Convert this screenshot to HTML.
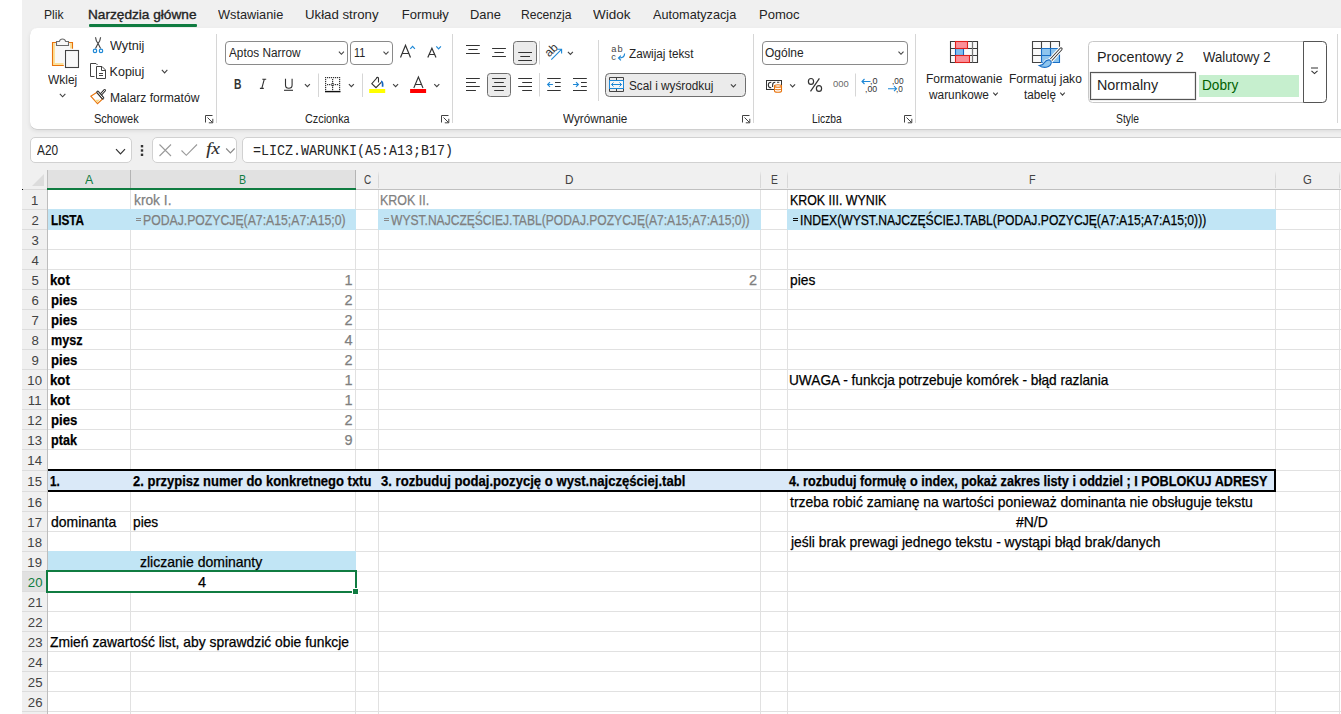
<!DOCTYPE html><html><head><meta charset="utf-8"><style>
html,body{margin:0;padding:0;}
body{width:1341px;height:714px;overflow:hidden;position:relative;background:#f0f0f0;font-family:'Liberation Sans', sans-serif;}
</style></head><body>
<div style="position:absolute;left:0;top:0;width:22px;height:714px;background:#fff"></div>
<div style="position:absolute;left:30px;top:28px;width:1340px;height:101px;background:#fff;border-radius:7px;box-shadow:0 0.5px 0.5px rgba(0,0,0,0.16),0 2px 4px rgba(0,0,0,0.09)"></div>
<div style="position:absolute;left:89px;top:24px;width:108px;height:2.5px;background:#107c41;border-radius:1px"></div>
<div style="position:absolute;left:47px;top:189px;width:1294px;height:525px;background:#fff"></div>
<div style="position:absolute;left:47px;top:209px;width:1294px;height:1px;background:#e1e1e1"></div>
<div style="position:absolute;left:47px;top:229px;width:1294px;height:1px;background:#e1e1e1"></div>
<div style="position:absolute;left:47px;top:249px;width:1294px;height:1px;background:#e1e1e1"></div>
<div style="position:absolute;left:47px;top:269px;width:1294px;height:1px;background:#e1e1e1"></div>
<div style="position:absolute;left:47px;top:289px;width:1294px;height:1px;background:#e1e1e1"></div>
<div style="position:absolute;left:47px;top:309px;width:1294px;height:1px;background:#e1e1e1"></div>
<div style="position:absolute;left:47px;top:329px;width:1294px;height:1px;background:#e1e1e1"></div>
<div style="position:absolute;left:47px;top:349px;width:1294px;height:1px;background:#e1e1e1"></div>
<div style="position:absolute;left:47px;top:369px;width:1294px;height:1px;background:#e1e1e1"></div>
<div style="position:absolute;left:47px;top:389px;width:1294px;height:1px;background:#e1e1e1"></div>
<div style="position:absolute;left:47px;top:409px;width:1294px;height:1px;background:#e1e1e1"></div>
<div style="position:absolute;left:47px;top:429px;width:1294px;height:1px;background:#e1e1e1"></div>
<div style="position:absolute;left:47px;top:449px;width:1294px;height:1px;background:#e1e1e1"></div>
<div style="position:absolute;left:47px;top:470px;width:1294px;height:1px;background:#e1e1e1"></div>
<div style="position:absolute;left:47px;top:491px;width:1294px;height:1px;background:#e1e1e1"></div>
<div style="position:absolute;left:47px;top:511px;width:1294px;height:1px;background:#e1e1e1"></div>
<div style="position:absolute;left:47px;top:531px;width:1294px;height:1px;background:#e1e1e1"></div>
<div style="position:absolute;left:47px;top:551px;width:1294px;height:1px;background:#e1e1e1"></div>
<div style="position:absolute;left:47px;top:571px;width:1294px;height:1px;background:#e1e1e1"></div>
<div style="position:absolute;left:47px;top:591px;width:1294px;height:1px;background:#e1e1e1"></div>
<div style="position:absolute;left:47px;top:611px;width:1294px;height:1px;background:#e1e1e1"></div>
<div style="position:absolute;left:47px;top:631px;width:1294px;height:1px;background:#e1e1e1"></div>
<div style="position:absolute;left:47px;top:651px;width:1294px;height:1px;background:#e1e1e1"></div>
<div style="position:absolute;left:47px;top:671px;width:1294px;height:1px;background:#e1e1e1"></div>
<div style="position:absolute;left:47px;top:691px;width:1294px;height:1px;background:#e1e1e1"></div>
<div style="position:absolute;left:47px;top:711px;width:1294px;height:1px;background:#e1e1e1"></div>
<div style="position:absolute;left:130px;top:189px;width:1px;height:525px;background:#e1e1e1"></div>
<div style="position:absolute;left:355px;top:189px;width:1px;height:525px;background:#e1e1e1"></div>
<div style="position:absolute;left:378px;top:189px;width:1px;height:525px;background:#e1e1e1"></div>
<div style="position:absolute;left:760px;top:189px;width:1px;height:525px;background:#e1e1e1"></div>
<div style="position:absolute;left:787px;top:189px;width:1px;height:525px;background:#e1e1e1"></div>
<div style="position:absolute;left:1275px;top:189px;width:1px;height:525px;background:#e1e1e1"></div>
<div style="position:absolute;left:1339px;top:189px;width:1px;height:525px;background:#e1e1e1"></div>
<div style="position:absolute;left:48px;top:209px;width:308px;height:21px;background:#c1e5f5"></div>
<div style="position:absolute;left:378px;top:209px;width:383px;height:21px;background:#c1e5f5"></div>
<div style="position:absolute;left:787px;top:209px;width:489px;height:21px;background:#c1e5f5"></div>
<div style="position:absolute;left:48px;top:551px;width:308px;height:20px;background:#c1e5f5"></div>
<div style="position:absolute;left:47px;top:469px;width:1229px;height:23px;background:#000"></div>
<div style="position:absolute;left:47px;top:471px;width:1227px;height:19px;background:#dae9f8"></div>
<div style="position:absolute;left:47px;top:170px;width:308px;height:19px;background:#e1e1e1"></div>
<div style="position:absolute;left:22px;top:571px;width:25px;height:20px;background:#e1e1e1"></div>
<div style="position:absolute;left:47px;top:170px;width:1px;height:544px;background:#bdbdbd"></div>
<div style="position:absolute;left:22px;top:189px;width:25px;height:1px;background:#d8d8d8"></div>
<div style="position:absolute;left:47px;top:189px;width:1294px;height:1px;background:#c0c0c0"></div>
<div style="position:absolute;left:47px;top:188px;width:309px;height:2px;background:#107c41"></div>
<div style="position:absolute;left:130px;top:170px;width:1px;height:18px;background:#b4b4b4"></div>
<div style="position:absolute;left:355px;top:170px;width:1px;height:18px;background:#b4b4b4"></div>
<div style="position:absolute;left:378px;top:171px;width:1px;height:17px;background:linear-gradient(#f0f0f0,#d8d8d8 30%,#d8d8d8)"></div>
<div style="position:absolute;left:760px;top:171px;width:1px;height:17px;background:linear-gradient(#f0f0f0,#d8d8d8 30%,#d8d8d8)"></div>
<div style="position:absolute;left:787px;top:171px;width:1px;height:17px;background:linear-gradient(#f0f0f0,#d8d8d8 30%,#d8d8d8)"></div>
<div style="position:absolute;left:1275px;top:171px;width:1px;height:17px;background:linear-gradient(#f0f0f0,#d8d8d8 30%,#d8d8d8)"></div>
<div style="position:absolute;left:1339px;top:171px;width:1px;height:17px;background:linear-gradient(#f0f0f0,#d8d8d8 30%,#d8d8d8)"></div>
<div style="position:absolute;left:22px;top:209px;width:25px;height:1px;background:#dcdcdc"></div>
<div style="position:absolute;left:22px;top:229px;width:25px;height:1px;background:#dcdcdc"></div>
<div style="position:absolute;left:22px;top:249px;width:25px;height:1px;background:#dcdcdc"></div>
<div style="position:absolute;left:22px;top:269px;width:25px;height:1px;background:#dcdcdc"></div>
<div style="position:absolute;left:22px;top:289px;width:25px;height:1px;background:#dcdcdc"></div>
<div style="position:absolute;left:22px;top:309px;width:25px;height:1px;background:#dcdcdc"></div>
<div style="position:absolute;left:22px;top:329px;width:25px;height:1px;background:#dcdcdc"></div>
<div style="position:absolute;left:22px;top:349px;width:25px;height:1px;background:#dcdcdc"></div>
<div style="position:absolute;left:22px;top:369px;width:25px;height:1px;background:#dcdcdc"></div>
<div style="position:absolute;left:22px;top:389px;width:25px;height:1px;background:#dcdcdc"></div>
<div style="position:absolute;left:22px;top:409px;width:25px;height:1px;background:#dcdcdc"></div>
<div style="position:absolute;left:22px;top:429px;width:25px;height:1px;background:#dcdcdc"></div>
<div style="position:absolute;left:22px;top:449px;width:25px;height:1px;background:#dcdcdc"></div>
<div style="position:absolute;left:22px;top:470px;width:25px;height:1px;background:#dcdcdc"></div>
<div style="position:absolute;left:22px;top:491px;width:25px;height:1px;background:#dcdcdc"></div>
<div style="position:absolute;left:22px;top:511px;width:25px;height:1px;background:#dcdcdc"></div>
<div style="position:absolute;left:22px;top:531px;width:25px;height:1px;background:#dcdcdc"></div>
<div style="position:absolute;left:22px;top:551px;width:25px;height:1px;background:#dcdcdc"></div>
<div style="position:absolute;left:22px;top:571px;width:25px;height:1px;background:#dcdcdc"></div>
<div style="position:absolute;left:22px;top:591px;width:25px;height:1px;background:#dcdcdc"></div>
<div style="position:absolute;left:22px;top:611px;width:25px;height:1px;background:#dcdcdc"></div>
<div style="position:absolute;left:22px;top:631px;width:25px;height:1px;background:#dcdcdc"></div>
<div style="position:absolute;left:22px;top:651px;width:25px;height:1px;background:#dcdcdc"></div>
<div style="position:absolute;left:22px;top:671px;width:25px;height:1px;background:#dcdcdc"></div>
<div style="position:absolute;left:22px;top:691px;width:25px;height:1px;background:#dcdcdc"></div>
<div style="position:absolute;left:22px;top:711px;width:25px;height:1px;background:#dcdcdc"></div>
<svg style="position:absolute;left:32px;top:174px" width="13" height="12"><path d="M12 0 L12 12 L0 12 Z" fill="#dcdcdc"/></svg>
<div style="position:absolute;left:22px;top:189px;width:1px;height:1px;background:#000"></div>
<div style="position:absolute;left:130px;top:572px;width:1px;height:19px;background:#fff"></div>
<div style="position:absolute;left:130px;top:632px;width:1px;height:19px;background:#fff"></div>
<div style="position:absolute;left:46px;top:570px;width:307px;height:19px;border:2px solid #107c41"></div>
<div style="position:absolute;left:353px;top:589px;width:5px;height:5px;background:#107c41;outline:1px solid #fff"></div>
<div style="position:absolute;left:136px;top:218px;width:5px;height:1px;background:#8a8a8a"></div>
<div style="position:absolute;left:136px;top:220px;width:5px;height:1px;background:#8a8a8a"></div>
<div style="position:absolute;left:384px;top:218px;width:5px;height:1px;background:#8a8a8a"></div>
<div style="position:absolute;left:384px;top:220px;width:5px;height:1px;background:#8a8a8a"></div>
<div style="position:absolute;left:793px;top:218px;width:5px;height:1px;background:#111"></div>
<div style="position:absolute;left:793px;top:220px;width:5px;height:1px;background:#111"></div>
<div style="position:absolute;left:30px;top:137px;width:102px;height:26px;box-sizing:border-box;border:1px solid #d1d1d1;border-radius:5px;background:#fff;"></div>
<div style="position:absolute;left:152px;top:137px;width:85px;height:26px;box-sizing:border-box;border:1px solid #d1d1d1;border-radius:5px;background:#fff;"></div>
<div style="position:absolute;left:242px;top:137px;width:1158px;height:26px;box-sizing:border-box;border:1px solid #d1d1d1;border-radius:5px;background:#fff;"></div>
<div style="position:absolute;left:225px;top:41px;width:123px;height:24px;box-sizing:border-box;border:1px solid #8a8a8a;border-radius:4px;background:#fff;"></div>
<div style="position:absolute;left:350px;top:41px;width:43px;height:24px;box-sizing:border-box;border:1px solid #8a8a8a;border-radius:4px;background:#fff;"></div>
<div style="position:absolute;left:762px;top:41px;width:146px;height:24px;box-sizing:border-box;border:1px solid #8a8a8a;border-radius:4px;background:#fff;"></div>
<svg style="position:absolute;left:0;top:0" width="1341" height="714"><rect x="53" y="43" width="19" height="22" fill="#f8f8f8"/><path d="M54 43 V64 H63.5 M71 43 V48.5" fill="none" stroke="#fbe09a" stroke-width="2"/><path d="M56.5 42.5 H52.5 V65.5 H63.8 M68.5 42.5 H72.5 V48.8" fill="none" stroke="#e8730c" stroke-width="1.1"/><path d="M56.5 45.5 V41.5 H59.3 A3.3 3.3 0 0 1 65.7 41.5 H68.5 V45.5 Z" fill="#f8f8f8" stroke="#6b6b6b" stroke-width="1.1"/><rect x="65.5" y="50.5" width="13" height="17" fill="#f8f8f8" stroke="#fff" stroke-width="3"/><rect x="65.5" y="50.5" width="13" height="17" fill="#f8f8f8" stroke="#424242" stroke-width="1.1"/><path d="M95.5 37.3 Q95.9 41.3 98.1 43.5 L100.6 48.4 M100.6 37.3 Q100.2 41.3 98 43.5 L95.5 48.4" stroke="#444" stroke-width="1.15" fill="none"/><circle cx="95" cy="50.9" r="1.7" fill="none" stroke="#1e88d6" stroke-width="1.2"/><circle cx="101" cy="50.9" r="1.7" fill="none" stroke="#1e88d6" stroke-width="1.2"/><path d="M94.5 76.5 H90.5 V63.5 H96 L97.5 65" fill="none" stroke="#424242"/><path d="M96.5 66.5 H102 L105.5 70 V78.5 H96.5 Z M101.5 66.5 V70.5 H105.5" fill="#fff" stroke="#424242"/><path d="M99 73.5 H103 M99 75.5 H103" stroke="#424242"/><path d="M90.8 96.2 L97 92.3 L102.6 99 L97.5 103.7 Z" fill="#fff" stroke="#e8730c" stroke-width="1.1"/><path d="M94.5 100 L100 99.5 L97.3 102.8 Z" fill="#fbd88a"/><path d="M100.8 94.6 L104.6 90.4" stroke="#333" stroke-width="2.8" stroke-linecap="round"/><path d="M100.8 94.6 L104.6 90.4" stroke="#fff" stroke-width="0.9" stroke-linecap="round"/><path d="M97.8 92.2 L102.8 98" stroke="#333" stroke-width="3" stroke-linecap="round"/><path d="M97.8 92.2 L102.8 98" stroke="#fff" stroke-width="1" stroke-linecap="round"/><path d="M59.85 93.8 L62.6 96.8 L65.35 93.8" fill="none" stroke="#424242" stroke-width="1.1"/><path d="M161.85 69.9 L164.6 72.9 L167.35 69.9" fill="none" stroke="#424242" stroke-width="1.1"/><path d="M205.5 122.5 V115.5 H212.5" fill="none" stroke="#424242"/><path d="M207.5 117.5 L212.5 122.5 M212.8 118.8 V122.8 H208.8" fill="none" stroke="#424242"/><path d="M441.5 122.5 V115.5 H448.5" fill="none" stroke="#424242"/><path d="M443.5 117.5 L448.5 122.5 M448.8 118.8 V122.8 H444.8" fill="none" stroke="#424242"/><path d="M742.5 122.5 V115.5 H749.5" fill="none" stroke="#424242"/><path d="M744.5 117.5 L749.5 122.5 M749.8 118.8 V122.8 H745.8" fill="none" stroke="#424242"/><path d="M904.5 122.5 V115.5 H911.5" fill="none" stroke="#424242"/><path d="M906.5 117.5 L911.5 122.5 M911.8 118.8 V122.8 H907.8" fill="none" stroke="#424242"/><path d="M216.5 34 V123" stroke="#d6d6d6"/><path d="M452.5 34 V123" stroke="#d6d6d6"/><path d="M753.5 34 V123" stroke="#d6d6d6"/><path d="M915.5 34 V123" stroke="#d6d6d6"/><path d="M1337.5 34 V123" stroke="#d6d6d6"/><path d="M318.5 73.5 V97" stroke="#d6d6d6"/><path d="M362.5 73.5 V97" stroke="#d6d6d6"/><path d="M539.5 41 V64.5" stroke="#d6d6d6"/><path d="M539.5 73 V96.5" stroke="#d6d6d6"/><path d="M598.5 40 V101" stroke="#d6d6d6"/><path d="M855.5 73.5 V96.5" stroke="#d6d6d6"/><path d="M338.9 51.7 L341.4 54.3 L343.9 51.7" fill="none" stroke="#424242" stroke-width="1.1"/><path d="M383.5 51.7 L386 54.3 L388.5 51.7" fill="none" stroke="#424242" stroke-width="1.1"/><path d="M400.5 57.5 L405.5 45.3 L410.5 57.5 M402.2 53.5 H408.8" fill="none" stroke="#333" stroke-width="1.2"/><path d="M410.3 48.8 L412.6 46.4 L414.9 48.8" fill="none" stroke="#1e88d6" stroke-width="1.2"/><path d="M427.8 57.5 L431.9 48.3 L436 57.5 M429.2 54.5 H434.6" fill="none" stroke="#333" stroke-width="1.2"/><path d="M436.3 46.4 L438.6 48.8 L440.9 46.4" fill="none" stroke="#1e88d6" stroke-width="1.2"/><path d="M262.3 79.2 H266.2 M259.9 88.4 H263.8 M264.3 79.2 L261.8 88.4" stroke="#333" stroke-width="1.1" fill="none"/><path d="M285.5 78.7 V85 A3.3 3.3 0 0 0 292.1 85 V78.7" fill="none" stroke="#333" stroke-width="1.1"/><path d="M284 90.3 H293" stroke="#333" stroke-width="1.1"/><path d="M304.9 84.10000000000001 L307.4 86.7 L309.9 84.10000000000001" fill="none" stroke="#424242" stroke-width="1.1"/><rect x="325" y="77" width="1.2" height="1.2" fill="#333"/><rect x="327" y="77" width="1.2" height="1.2" fill="#333"/><rect x="329" y="77" width="1.2" height="1.2" fill="#333"/><rect x="331" y="77" width="1.2" height="1.2" fill="#333"/><rect x="333" y="77" width="1.2" height="1.2" fill="#333"/><rect x="335" y="77" width="1.2" height="1.2" fill="#333"/><rect x="337" y="77" width="1.2" height="1.2" fill="#333"/><rect x="339" y="77" width="1.2" height="1.2" fill="#333"/><rect x="325" y="79" width="1.2" height="1.2" fill="#333"/><rect x="339" y="79" width="1.2" height="1.2" fill="#333"/><rect x="332" y="79" width="1.2" height="1.2" fill="#333"/><rect x="325" y="81" width="1.2" height="1.2" fill="#333"/><rect x="339" y="81" width="1.2" height="1.2" fill="#333"/><rect x="332" y="81" width="1.2" height="1.2" fill="#333"/><rect x="325" y="83" width="1.2" height="1.2" fill="#333"/><rect x="339" y="83" width="1.2" height="1.2" fill="#333"/><rect x="332" y="83" width="1.2" height="1.2" fill="#333"/><rect x="325" y="85" width="1.2" height="1.2" fill="#333"/><rect x="339" y="85" width="1.2" height="1.2" fill="#333"/><rect x="332" y="85" width="1.2" height="1.2" fill="#333"/><rect x="325" y="87" width="1.2" height="1.2" fill="#333"/><rect x="339" y="87" width="1.2" height="1.2" fill="#333"/><rect x="332" y="87" width="1.2" height="1.2" fill="#333"/><rect x="325" y="89" width="1.2" height="1.2" fill="#333"/><rect x="339" y="89" width="1.2" height="1.2" fill="#333"/><rect x="332" y="89" width="1.2" height="1.2" fill="#333"/><rect x="327" y="84" width="1.2" height="1.2" fill="#333"/><rect x="329" y="84" width="1.2" height="1.2" fill="#333"/><rect x="335" y="84" width="1.2" height="1.2" fill="#333"/><rect x="337" y="84" width="1.2" height="1.2" fill="#333"/><circle cx="332.6" cy="84.6" r="1.3" fill="none" stroke="#333" stroke-width="0.9"/><path d="M325 91.6 H340.5" stroke="#111" stroke-width="1.4"/><path d="M348.9 84.10000000000001 L351.4 86.7 L353.9 84.10000000000001" fill="none" stroke="#424242" stroke-width="1.1"/><path d="M378.5 82.5 V78.5 A1 1 0 0 0 376.5 78.3 L371.8 83.7 L376 87.7 L381.2 82.3" fill="none" stroke="#333" stroke-width="1.1"/><path d="M381 81.3 Q383 81.3 382.6 86.8" fill="none" stroke="#1565c0" stroke-width="1.7"/><rect x="369.2" y="89" width="16" height="4" fill="#ffff00"/><path d="M393.1 84.10000000000001 L395.6 86.7 L398.1 84.10000000000001" fill="none" stroke="#424242" stroke-width="1.1"/><path d="M413.8 88 L418.4 77 L423 88 M415.5 84.5 H421.3" fill="none" stroke="#333" stroke-width="1.1"/><rect x="410.1" y="89" width="16" height="4" fill="#ff0000"/><path d="M434.3 84.10000000000001 L436.8 86.7 L439.3 84.10000000000001" fill="none" stroke="#424242" stroke-width="1.1"/><path d="M466 45.5 H479.8 M468.4 49.5 H477.7 M466 53.5 H479.8" stroke="#333" stroke-width="1.15" fill="none"/><path d="M492.1 48.5 H505.9 M494.4 52.5 H503.8 M492.1 56.5 H505.9" stroke="#333" stroke-width="1.15" fill="none"/><rect x="513.5" y="41.5" width="23" height="23" rx="3" fill="#ebebeb" stroke="#6e6e6e"/><path d="M518.2 52.5 H532 M520.3 56.5 H530 M518.2 60.5 H532" stroke="#333" stroke-width="1.15" fill="none"/><text x="0" y="0" transform="translate(549.2 57.6) rotate(-45)" font-family="Liberation Sans" font-size="12" fill="#333">ab</text><path d="M551.3 59.7 L561.5 49.3 M557.3 49.2 H561.6 V53.5" fill="none" stroke="#1e88d6" stroke-width="1.1"/><path d="M567.9 51.900000000000006 L570.4 54.5 L572.9 51.900000000000006" fill="none" stroke="#424242" stroke-width="1.1"/><path d="M466 78.5 H479.8 M466 82.5 H475.9 M466 86.5 H479.8 M466 90.5 H475.9" stroke="#333" stroke-width="1.15" fill="none"/><rect x="487.5" y="73.5" width="23" height="23" rx="3" fill="#ebebeb" stroke="#6e6e6e"/><path d="M492.1 78.5 H505.9 M494.2 82.5 H503.8 M492.1 86.5 H505.9 M494.2 90.5 H503.8" stroke="#333" stroke-width="1.15" fill="none"/><path d="M518.2 78.5 H532 M522.2 82.5 H532 M518.2 86.5 H532 M522.2 90.5 H532" stroke="#333" stroke-width="1.15" fill="none"/><path d="M547.2 78.5 H560.7 M555 82.5 H560.7 M555 86.5 H560.7 M547.2 90.5 H560.7" stroke="#333" stroke-width="1.15" fill="none"/><path d="M547.6 84.5 H552.9 M550 82.2 L547.6 84.5 L550 86.8" fill="none" stroke="#1e88d6" stroke-width="1.1"/><path d="M573 78.5 H586.8 M581 82.5 H586.8 M581 86.5 H586.8 M573 90.5 H586.8" stroke="#333" stroke-width="1.15" fill="none"/><path d="M573 84.5 H578.4 M576 82.2 L578.4 84.5 L576 86.8" fill="none" stroke="#1e88d6" stroke-width="1.1"/><text x="611.2" y="52.3" font-family="Liberation Sans" font-size="9.3" fill="#444">a</text><text x="617.4" y="52.3" font-family="Liberation Sans" font-size="9.3" fill="#444">b</text><text x="611.2" y="59.8" font-family="Liberation Sans" font-size="9.3" fill="#444">c</text><path d="M624.6 53.4 Q624.6 58 618.6 58 M620.9 55.7 L618.5 58 L620.9 60.3" fill="none" stroke="#1e88d6" stroke-width="1.15"/><rect x="605.5" y="73.5" width="140" height="23" rx="4" fill="#ebebeb" stroke="#6e6e6e"/><path d="M609.5 77.5 H623.5 M609.5 91.5 H623.5 M616.5 77.5 V80.5 M616.5 88.5 V91.5 M609.5 77.5 V91.5 M623.5 77.5 V91.5" fill="none" stroke="#444"/><rect x="609.5" y="80.5" width="14" height="8" fill="#f7f7f7" stroke="#1e88d6"/><path d="M611.5 84.5 H621.5 M613.5 82.5 L611.5 84.5 L613.5 86.5 M619.5 82.5 L621.5 84.5 L619.5 86.5" fill="none" stroke="#1e88d6"/><path d="M730.9 84.3 L733.4 86.89999999999999 L735.9 84.3" fill="none" stroke="#424242" stroke-width="1.1"/><path d="M898.5 51.7 L901 54.3 L903.5 51.7" fill="none" stroke="#424242" stroke-width="1.1"/><rect x="766.5" y="80.5" width="15" height="9" fill="#fff" stroke="#333"/><path d="M771.3 82.3 Q768.3 82.3 768.3 85 Q768.3 87.8 771.3 87.8 M775.3 82.3 Q772.6 82.3 772.6 85 V87 M777 82.3 H779.3" fill="none" stroke="#333" stroke-width="1.1"/><path d="M774.5 86 V91 A3.5 1.3 0 0 0 781.5 91 V86 Z" fill="#fff" stroke="#e8730c" stroke-width="1.1"/><ellipse cx="778" cy="86" rx="3.5" ry="1.3" fill="#fff" stroke="#e8730c" stroke-width="1.1"/><path d="M774.5 88.5 A3.5 1.3 0 0 0 781.5 88.5" fill="none" stroke="#e8730c"/><path d="M790.1 84.3 L792.6 86.89999999999999 L795.1 84.3" fill="none" stroke="#424242" stroke-width="1.1"/><ellipse cx="811" cy="81.4" rx="2.6" ry="2.9" fill="none" stroke="#333" stroke-width="1.2"/><ellipse cx="819" cy="88.5" rx="2.6" ry="2.9" fill="none" stroke="#333" stroke-width="1.2"/><path d="M819.4 78.3 L810.5 91.3" stroke="#333" stroke-width="1.2"/><path d="M862 81.5 H870.5 M864.5 79 L862 81.5 L864.5 84" fill="none" stroke="#1e88d6" stroke-width="1.1"/><path d="M888 88.7 H896.5 M894 86.2 L896.5 88.7 L894 91.2" fill="none" stroke="#1e88d6" stroke-width="1.1"/><rect x="950.5" y="41.5" width="27" height="21" fill="#fafafa"/><path d="M950.5 41.5 H977.5 V62.5 H950.5 Z M950.5 48.5 H977.5 M950.5 55.5 H977.5 M972.5 41.5 V62.5" fill="none" stroke="#3a3a3a" stroke-width="1.1"/><path d="M972.5 41.5 V62.5" stroke="#777" stroke-width="1.1"/><rect x="955.5" y="48.5" width="8" height="7" fill="#7dbdf0" stroke="#1565c0" stroke-width="1.1"/><rect x="955.5" y="41.5" width="12" height="7" fill="#fb8f98" stroke="#e0201c" stroke-width="1.1"/><rect x="955.5" y="55.5" width="14" height="7" fill="#fb8f98" stroke="#e0201c" stroke-width="1.1"/><path d="M993.25 92.7 L995.5 95.10000000000001 L997.75 92.7" fill="none" stroke="#424242" stroke-width="1.1"/><rect x="1032.5" y="41.5" width="27" height="21" fill="#fafafa"/><rect x="1041.5" y="48.5" width="18" height="14" fill="#8ec5ee"/><path d="M1041.5 62.5 H1032.5 V41.5 H1059.5 V48.5 M1032.5 48.5 H1041.5 M1032.5 55.5 H1041.5 M1041.5 41.5 V48.5 M1050.5 41.5 V48.5" fill="none" stroke="#444" stroke-width="1.1"/><path d="M1041.5 62.5 V48.5 H1059.5 V62.5 H1041.5 M1041.5 55.5 H1059.5 M1050.5 48.5 V62.5" fill="none" stroke="#1a6fc6" stroke-width="1.1"/><path d="M1049.5 61.5 L1061 49" stroke="#fff" stroke-width="5.5" stroke-linecap="round"/><path d="M1049.5 61.5 L1061 49" stroke="#333" stroke-width="3.2" stroke-linecap="round"/><path d="M1049.5 61.5 L1061 49" stroke="#fff" stroke-width="1.3" stroke-linecap="round"/><path d="M1039.3 65.6 Q1042.8 65.6 1044.3 62.6 Q1046.3 59.4 1049.6 59.9 L1051.3 61.9 Q1051.3 66.2 1046.3 67.2 Q1042.3 67.8 1039.3 65.6 Z" fill="#fff" stroke="#fff" stroke-width="2.2"/><path d="M1039.3 65.6 Q1042.8 65.6 1044.3 62.6 Q1046.3 59.4 1049.6 59.9 L1051.3 61.9 Q1051.3 66.2 1046.3 67.2 Q1042.3 67.8 1039.3 65.6 Z" fill="#8ec5ee" stroke="#1a6fc6" stroke-width="1.1"/><path d="M1060.25 92.7 L1062.5 95.10000000000001 L1064.75 92.7" fill="none" stroke="#424242" stroke-width="1.1"/><rect x="1088.5" y="41.5" width="238" height="61" rx="4" fill="#fff" stroke="#c8c8c8"/><path d="M1303.5 41.5 H1322.5 A4 4 0 0 1 1326.5 45.5 V98.5 A4 4 0 0 1 1322.5 102.5 H1303.5 Z" fill="#fff" stroke="#555"/><rect x="1090.5" y="72.5" width="105" height="27" fill="#fff" stroke="#555" stroke-width="1.2"/><rect x="1091.5" y="73.5" width="103" height="25" fill="none" stroke="#e6e6e6"/><rect x="1199" y="75" width="100" height="22" fill="#c6efce"/><path d="M1311 68 H1318 M1311.5 70.8 L1314.5 73.6 L1317.5 70.8" fill="none" stroke="#333" stroke-width="1.1"/><path d="M116.0 149.2 L120.5 153.8 L125.0 149.2" fill="none" stroke="#333" stroke-width="1.2"/><rect x="140.8" y="145" width="2.4" height="2.4" fill="#333"/><rect x="140.8" y="149.3" width="2.4" height="2.4" fill="#333"/><rect x="140.8" y="153.6" width="2.4" height="2.4" fill="#333"/><path d="M159.5 144.5 L171 156 M171 144.5 L159.5 156" stroke="#9a9a9a" stroke-width="1.1"/><path d="M181.5 150.5 L186.3 155.3 L197 144.5" fill="none" stroke="#9a9a9a" stroke-width="1.1"/><text x="206.3" y="154.2" font-family="Liberation Serif" font-style="italic" font-size="17.5" fill="#2a2a2a" stroke="#2a2a2a" stroke-width="0.15" transform="translate(206.3 0) scale(1.08 1) translate(-206.3 0)">fx</text><path d="M226.15 148.5 L230.4 152.89999999999998 L234.65 148.5" fill="none" stroke="#888" stroke-width="1.1"/></svg>
<div style="position:absolute;left:43.57px;top:8.00px;white-space:pre;font:normal normal 13px/1 'Liberation Sans',sans-serif;color:#242424;transform:scaleX(0.9341);transform-origin:0 0;">Plik</div>
<div style="position:absolute;left:88.25px;top:8.00px;white-space:pre;font:normal normal 13px/1 'Liberation Sans',sans-serif;color:#242424;transform:scaleX(1.0499);transform-origin:0 0;-webkit-text-stroke:0.35px #242424;">Narzędzia główne</div>
<div style="position:absolute;left:218.00px;top:8.00px;white-space:pre;font:normal normal 13px/1 'Liberation Sans',sans-serif;color:#242424;transform:scaleX(0.9813);transform-origin:0 0;">Wstawianie</div>
<div style="position:absolute;left:304.98px;top:8.00px;white-space:pre;font:normal normal 13px/1 'Liberation Sans',sans-serif;color:#242424;transform:scaleX(1.0174);transform-origin:0 0;">Układ strony</div>
<div style="position:absolute;left:401.80px;top:8.00px;white-space:pre;font:normal normal 13px/1 'Liberation Sans',sans-serif;color:#242424;">Formuły</div>
<div style="position:absolute;left:470.01px;top:8.00px;white-space:pre;font:normal normal 13px/1 'Liberation Sans',sans-serif;color:#242424;transform:scaleX(0.9917);transform-origin:0 0;">Dane</div>
<div style="position:absolute;left:520.57px;top:8.00px;white-space:pre;font:normal normal 13px/1 'Liberation Sans',sans-serif;color:#242424;transform:scaleX(0.9321);transform-origin:0 0;">Recenzja</div>
<div style="position:absolute;left:592.60px;top:8.00px;white-space:pre;font:normal normal 13px/1 'Liberation Sans',sans-serif;color:#242424;transform:scaleX(1.0350);transform-origin:0 0;">Widok</div>
<div style="position:absolute;left:652.90px;top:8.00px;white-space:pre;font:normal normal 13px/1 'Liberation Sans',sans-serif;color:#242424;transform:scaleX(0.9764);transform-origin:0 0;">Automatyzacja</div>
<div style="position:absolute;left:759.30px;top:8.00px;white-space:pre;font:normal normal 13px/1 'Liberation Sans',sans-serif;color:#242424;transform:scaleX(1.0035);transform-origin:0 0;">Pomoc</div>
<div style="position:absolute;left:84.90px;top:172.77px;white-space:pre;font:normal normal 13.5px/1 'Liberation Sans',sans-serif;color:#107c41;transform:scaleX(0.9111);transform-origin:0 0;">A</div>
<div style="position:absolute;left:239.41px;top:172.77px;white-space:pre;font:normal normal 13.5px/1 'Liberation Sans',sans-serif;color:#107c41;transform:scaleX(0.7875);transform-origin:0 0;">B</div>
<div style="position:absolute;left:363.60px;top:172.77px;white-space:pre;font:normal normal 13.5px/1 'Liberation Sans',sans-serif;color:#424242;transform:scaleX(0.7400);transform-origin:0 0;">C</div>
<div style="position:absolute;left:564.83px;top:172.77px;white-space:pre;font:normal normal 13.5px/1 'Liberation Sans',sans-serif;color:#424242;transform:scaleX(0.8667);transform-origin:0 0;">D</div>
<div style="position:absolute;left:771.04px;top:172.77px;white-space:pre;font:normal normal 13.5px/1 'Liberation Sans',sans-serif;color:#424242;transform:scaleX(0.7625);transform-origin:0 0;">E</div>
<div style="position:absolute;left:1028.70px;top:172.77px;white-space:pre;font:normal normal 13.5px/1 'Liberation Sans',sans-serif;color:#424242;transform:scaleX(0.8000);transform-origin:0 0;">F</div>
<div style="position:absolute;left:1303.40px;top:172.77px;white-space:pre;font:normal normal 13.5px/1 'Liberation Sans',sans-serif;color:#424242;transform:scaleX(0.8400);transform-origin:0 0;">G</div>
<div style="position:absolute;left:31.00px;top:194.23px;white-space:pre;font:normal normal 13.2px/1 'Liberation Sans',sans-serif;color:#424242;">1</div>
<div style="position:absolute;left:31.50px;top:214.23px;white-space:pre;font:normal normal 13.2px/1 'Liberation Sans',sans-serif;color:#424242;">2</div>
<div style="position:absolute;left:31.50px;top:234.23px;white-space:pre;font:normal normal 13.2px/1 'Liberation Sans',sans-serif;color:#424242;">3</div>
<div style="position:absolute;left:31.50px;top:254.23px;white-space:pre;font:normal normal 13.2px/1 'Liberation Sans',sans-serif;color:#424242;">4</div>
<div style="position:absolute;left:31.50px;top:274.23px;white-space:pre;font:normal normal 13.2px/1 'Liberation Sans',sans-serif;color:#424242;">5</div>
<div style="position:absolute;left:31.50px;top:294.23px;white-space:pre;font:normal normal 13.2px/1 'Liberation Sans',sans-serif;color:#424242;">6</div>
<div style="position:absolute;left:31.50px;top:314.23px;white-space:pre;font:normal normal 13.2px/1 'Liberation Sans',sans-serif;color:#424242;">7</div>
<div style="position:absolute;left:31.50px;top:334.23px;white-space:pre;font:normal normal 13.2px/1 'Liberation Sans',sans-serif;color:#424242;">8</div>
<div style="position:absolute;left:31.50px;top:354.23px;white-space:pre;font:normal normal 13.2px/1 'Liberation Sans',sans-serif;color:#424242;">9</div>
<div style="position:absolute;left:27.33px;top:374.23px;white-space:pre;font:normal normal 13.2px/1 'Liberation Sans',sans-serif;color:#424242;">10</div>
<div style="position:absolute;left:27.82px;top:394.23px;white-space:pre;font:normal normal 13.2px/1 'Liberation Sans',sans-serif;color:#424242;">11</div>
<div style="position:absolute;left:27.33px;top:414.23px;white-space:pre;font:normal normal 13.2px/1 'Liberation Sans',sans-serif;color:#424242;">12</div>
<div style="position:absolute;left:27.33px;top:434.23px;white-space:pre;font:normal normal 13.2px/1 'Liberation Sans',sans-serif;color:#424242;">13</div>
<div style="position:absolute;left:27.33px;top:454.23px;white-space:pre;font:normal normal 13.2px/1 'Liberation Sans',sans-serif;color:#424242;">14</div>
<div style="position:absolute;left:27.33px;top:475.23px;white-space:pre;font:normal normal 13.2px/1 'Liberation Sans',sans-serif;color:#424242;">15</div>
<div style="position:absolute;left:27.33px;top:496.23px;white-space:pre;font:normal normal 13.2px/1 'Liberation Sans',sans-serif;color:#424242;">16</div>
<div style="position:absolute;left:27.33px;top:516.23px;white-space:pre;font:normal normal 13.2px/1 'Liberation Sans',sans-serif;color:#424242;">17</div>
<div style="position:absolute;left:27.33px;top:536.23px;white-space:pre;font:normal normal 13.2px/1 'Liberation Sans',sans-serif;color:#424242;">18</div>
<div style="position:absolute;left:27.33px;top:556.23px;white-space:pre;font:normal normal 13.2px/1 'Liberation Sans',sans-serif;color:#424242;">19</div>
<div style="position:absolute;left:27.83px;top:576.23px;white-space:pre;font:normal normal 13.2px/1 'Liberation Sans',sans-serif;color:#107c41;">20</div>
<div style="position:absolute;left:27.83px;top:596.23px;white-space:pre;font:normal normal 13.2px/1 'Liberation Sans',sans-serif;color:#424242;">21</div>
<div style="position:absolute;left:27.83px;top:616.23px;white-space:pre;font:normal normal 13.2px/1 'Liberation Sans',sans-serif;color:#424242;">22</div>
<div style="position:absolute;left:27.83px;top:636.23px;white-space:pre;font:normal normal 13.2px/1 'Liberation Sans',sans-serif;color:#424242;">23</div>
<div style="position:absolute;left:27.83px;top:656.23px;white-space:pre;font:normal normal 13.2px/1 'Liberation Sans',sans-serif;color:#424242;">24</div>
<div style="position:absolute;left:27.83px;top:676.23px;white-space:pre;font:normal normal 13.2px/1 'Liberation Sans',sans-serif;color:#424242;">25</div>
<div style="position:absolute;left:27.83px;top:696.23px;white-space:pre;font:normal normal 13.2px/1 'Liberation Sans',sans-serif;color:#424242;">26</div>
<div style="position:absolute;left:133.50px;top:192.73px;white-space:pre;font:normal normal 14.5px/1 'Liberation Sans',sans-serif;color:#7f7f7f;transform:scaleX(0.9493);transform-origin:0 0;-webkit-text-stroke:0.25px #7f7f7f;">krok I.</div>
<div style="position:absolute;left:380.44px;top:192.73px;white-space:pre;font:normal normal 14.5px/1 'Liberation Sans',sans-serif;color:#7f7f7f;transform:scaleX(0.8608);transform-origin:0 0;-webkit-text-stroke:0.25px #7f7f7f;">KROK II.</div>
<div style="position:absolute;left:789.95px;top:192.73px;white-space:pre;font:normal normal 14.5px/1 'Liberation Sans',sans-serif;color:#000;transform:scaleX(0.8544);transform-origin:0 0;-webkit-text-stroke:0.25px #000;">KROK III. WYNIK</div>
<div style="position:absolute;left:50.70px;top:212.73px;white-space:pre;font:normal bold 14.5px/1 'Liberation Sans',sans-serif;color:#000;transform:scaleX(0.8104);transform-origin:0 0;-webkit-text-stroke:0.25px #000;">LISTA</div>
<div style="position:absolute;left:143.06px;top:212.73px;white-space:pre;font:normal normal 14.5px/1 'Liberation Sans',sans-serif;color:#7f7f7f;transform:scaleX(0.8438);transform-origin:0 0;-webkit-text-stroke:0.25px #7f7f7f;">PODAJ.POZYCJĘ(A7:A15;A7:A15;0)</div>
<div style="position:absolute;left:390.90px;top:212.73px;white-space:pre;font:normal normal 14.5px/1 'Liberation Sans',sans-serif;color:#7f7f7f;transform:scaleX(0.8324);transform-origin:0 0;-webkit-text-stroke:0.25px #7f7f7f;">WYST.NAJCZĘŚCIEJ.TABL(PODAJ.POZYCJĘ(A7:A15;A7:A15;0))</div>
<div style="position:absolute;left:800.36px;top:212.73px;white-space:pre;font:normal normal 14.5px/1 'Liberation Sans',sans-serif;color:#000;transform:scaleX(0.8380);transform-origin:0 0;-webkit-text-stroke:0.25px #000;">INDEX(WYST.NAJCZĘŚCIEJ.TABL(PODAJ.POZYCJĘ(A7:A15;A7:A15;0)))</div>
<div style="position:absolute;left:49.79px;top:272.73px;white-space:pre;font:normal bold 14.5px/1 'Liberation Sans',sans-serif;color:#000;transform:scaleX(0.9129);transform-origin:0 0;-webkit-text-stroke:0.25px #000;">kot</div>
<div style="position:absolute;left:344.50px;top:272.73px;white-space:pre;font:normal normal 14.5px/1 'Liberation Sans',sans-serif;color:#7f7f7f;-webkit-text-stroke:0.25px #7f7f7f;">1</div>
<div style="position:absolute;left:50.70px;top:292.73px;white-space:pre;font:normal bold 14.5px/1 'Liberation Sans',sans-serif;color:#000;transform:scaleX(0.9085);transform-origin:0 0;-webkit-text-stroke:0.25px #000;">pies</div>
<div style="position:absolute;left:344.50px;top:292.73px;white-space:pre;font:normal normal 14.5px/1 'Liberation Sans',sans-serif;color:#7f7f7f;-webkit-text-stroke:0.25px #7f7f7f;">2</div>
<div style="position:absolute;left:50.70px;top:312.73px;white-space:pre;font:normal bold 14.5px/1 'Liberation Sans',sans-serif;color:#000;transform:scaleX(0.9085);transform-origin:0 0;-webkit-text-stroke:0.25px #000;">pies</div>
<div style="position:absolute;left:344.50px;top:312.73px;white-space:pre;font:normal normal 14.5px/1 'Liberation Sans',sans-serif;color:#7f7f7f;-webkit-text-stroke:0.25px #7f7f7f;">2</div>
<div style="position:absolute;left:50.70px;top:332.73px;white-space:pre;font:normal bold 14.5px/1 'Liberation Sans',sans-serif;color:#000;transform:scaleX(0.8689);transform-origin:0 0;-webkit-text-stroke:0.25px #000;">mysz</div>
<div style="position:absolute;left:344.50px;top:332.73px;white-space:pre;font:normal normal 14.5px/1 'Liberation Sans',sans-serif;color:#7f7f7f;-webkit-text-stroke:0.25px #7f7f7f;">4</div>
<div style="position:absolute;left:50.70px;top:352.73px;white-space:pre;font:normal bold 14.5px/1 'Liberation Sans',sans-serif;color:#000;transform:scaleX(0.9085);transform-origin:0 0;-webkit-text-stroke:0.25px #000;">pies</div>
<div style="position:absolute;left:344.50px;top:352.73px;white-space:pre;font:normal normal 14.5px/1 'Liberation Sans',sans-serif;color:#7f7f7f;-webkit-text-stroke:0.25px #7f7f7f;">2</div>
<div style="position:absolute;left:49.79px;top:372.73px;white-space:pre;font:normal bold 14.5px/1 'Liberation Sans',sans-serif;color:#000;transform:scaleX(0.9129);transform-origin:0 0;-webkit-text-stroke:0.25px #000;">kot</div>
<div style="position:absolute;left:344.50px;top:372.73px;white-space:pre;font:normal normal 14.5px/1 'Liberation Sans',sans-serif;color:#7f7f7f;-webkit-text-stroke:0.25px #7f7f7f;">1</div>
<div style="position:absolute;left:49.79px;top:392.73px;white-space:pre;font:normal bold 14.5px/1 'Liberation Sans',sans-serif;color:#000;transform:scaleX(0.9129);transform-origin:0 0;-webkit-text-stroke:0.25px #000;">kot</div>
<div style="position:absolute;left:344.50px;top:392.73px;white-space:pre;font:normal normal 14.5px/1 'Liberation Sans',sans-serif;color:#7f7f7f;-webkit-text-stroke:0.25px #7f7f7f;">1</div>
<div style="position:absolute;left:50.70px;top:412.73px;white-space:pre;font:normal bold 14.5px/1 'Liberation Sans',sans-serif;color:#000;transform:scaleX(0.9085);transform-origin:0 0;-webkit-text-stroke:0.25px #000;">pies</div>
<div style="position:absolute;left:344.50px;top:412.73px;white-space:pre;font:normal normal 14.5px/1 'Liberation Sans',sans-serif;color:#7f7f7f;-webkit-text-stroke:0.25px #7f7f7f;">2</div>
<div style="position:absolute;left:50.70px;top:432.73px;white-space:pre;font:normal bold 14.5px/1 'Liberation Sans',sans-serif;color:#000;transform:scaleX(0.8715);transform-origin:0 0;-webkit-text-stroke:0.25px #000;">ptak</div>
<div style="position:absolute;left:344.50px;top:432.73px;white-space:pre;font:normal normal 14.5px/1 'Liberation Sans',sans-serif;color:#7f7f7f;-webkit-text-stroke:0.25px #7f7f7f;">9</div>
<div style="position:absolute;left:749.00px;top:272.73px;white-space:pre;font:normal normal 14.5px/1 'Liberation Sans',sans-serif;color:#7f7f7f;-webkit-text-stroke:0.25px #7f7f7f;">2</div>
<div style="position:absolute;left:790.20px;top:272.73px;white-space:pre;font:normal normal 14.5px/1 'Liberation Sans',sans-serif;color:#000;transform:scaleX(0.9526);transform-origin:0 0;-webkit-text-stroke:0.25px #000;">pies</div>
<div style="position:absolute;left:789.16px;top:372.73px;white-space:pre;font:normal normal 14.5px/1 'Liberation Sans',sans-serif;color:#000;transform:scaleX(0.9426);transform-origin:0 0;-webkit-text-stroke:0.25px #000;">UWAGA - funkcja potrzebuje komórek - błąd razlania</div>
<div style="position:absolute;left:50.20px;top:474.23px;white-space:pre;font:normal bold 14.5px/1 'Liberation Sans',sans-serif;color:#000;transform:scaleX(0.8123);transform-origin:0 0;-webkit-text-stroke:0.25px #000;">1.</div>
<div style="position:absolute;left:132.60px;top:474.23px;white-space:pre;font:normal bold 14.5px/1 'Liberation Sans',sans-serif;color:#000;transform:scaleX(0.8966);transform-origin:0 0;-webkit-text-stroke:0.25px #000;">2. przypisz numer do konkretnego txtu</div>
<div style="position:absolute;left:381.00px;top:474.23px;white-space:pre;font:normal bold 14.5px/1 'Liberation Sans',sans-serif;color:#000;transform:scaleX(0.9036);transform-origin:0 0;-webkit-text-stroke:0.25px #000;">3. rozbuduj podaj.pozycję o wyst.najczęściej.tabl</div>
<div style="position:absolute;left:789.30px;top:474.23px;white-space:pre;font:normal bold 14.5px/1 'Liberation Sans',sans-serif;color:#000;transform:scaleX(0.8727);transform-origin:0 0;-webkit-text-stroke:0.25px #000;">4. rozbuduj formułę o index, pokaż zakres listy i oddziel ; I POBLOKUJ ADRESY</div>
<div style="position:absolute;left:790.00px;top:494.73px;white-space:pre;font:normal normal 14.5px/1 'Liberation Sans',sans-serif;color:#000;transform:scaleX(0.9619);transform-origin:0 0;-webkit-text-stroke:0.25px #000;">trzeba robić zamianę na wartości ponieważ dominanta nie obsługuje tekstu</div>
<div style="position:absolute;left:1016.00px;top:514.73px;white-space:pre;font:normal normal 14.5px/1 'Liberation Sans',sans-serif;color:#000;transform:scaleX(0.9612);transform-origin:0 0;-webkit-text-stroke:0.25px #000;">#N/D</div>
<div style="position:absolute;left:790.96px;top:534.73px;white-space:pre;font:normal normal 14.5px/1 'Liberation Sans',sans-serif;color:#000;transform:scaleX(0.9568);transform-origin:0 0;-webkit-text-stroke:0.25px #000;">jeśli brak prewagi jednego tekstu - wystąpi błąd brak/danych</div>
<div style="position:absolute;left:50.70px;top:514.73px;white-space:pre;font:normal normal 14.5px/1 'Liberation Sans',sans-serif;color:#000;transform:scaleX(0.9629);transform-origin:0 0;-webkit-text-stroke:0.25px #000;">dominanta</div>
<div style="position:absolute;left:133.00px;top:514.73px;white-space:pre;font:normal normal 14.5px/1 'Liberation Sans',sans-serif;color:#000;transform:scaleX(0.9488);transform-origin:0 0;-webkit-text-stroke:0.25px #000;">pies</div>
<div style="position:absolute;left:140.20px;top:554.73px;white-space:pre;font:normal normal 14.5px/1 'Liberation Sans',sans-serif;color:#000;transform:scaleX(0.9663);transform-origin:0 0;-webkit-text-stroke:0.25px #000;">zliczanie dominanty</div>
<div style="position:absolute;left:198.00px;top:574.73px;white-space:pre;font:normal normal 14.5px/1 'Liberation Sans',sans-serif;color:#000;-webkit-text-stroke:0.25px #000;">4</div>
<div style="position:absolute;left:50.00px;top:634.73px;white-space:pre;font:normal normal 14.5px/1 'Liberation Sans',sans-serif;color:#000;transform:scaleX(0.9565);transform-origin:0 0;-webkit-text-stroke:0.25px #000;">Zmień zawartość list, aby sprawdzić obie funkcje</div>
<div style="position:absolute;left:37.10px;top:142.73px;white-space:pre;font:normal normal 14.5px/1 'Liberation Sans',sans-serif;color:#242424;transform:scaleX(0.8160);transform-origin:0 0;">A20</div>
<div style="position:absolute;left:253.40px;top:144.15px;white-space:pre;font:normal normal 14px/1 'Liberation Mono',sans-serif;color:#242424;transform:scaleX(0.9519);transform-origin:0 0;">=LICZ.WARUNKI(A5:A13;B17)</div>
<div style="position:absolute;left:48.40px;top:73.92px;white-space:pre;font:normal normal 12.5px/1 'Liberation Sans',sans-serif;color:#242424;transform:scaleX(0.9571);transform-origin:0 0;">Wklej</div>
<div style="position:absolute;left:110.00px;top:39.52px;white-space:pre;font:normal normal 12.5px/1 'Liberation Sans',sans-serif;color:#242424;transform:scaleX(1.0139);transform-origin:0 0;">Wytnij</div>
<div style="position:absolute;left:109.60px;top:66.02px;white-space:pre;font:normal normal 12.5px/1 'Liberation Sans',sans-serif;color:#242424;">Kopiuj</div>
<div style="position:absolute;left:109.63px;top:92.02px;white-space:pre;font:normal normal 12.5px/1 'Liberation Sans',sans-serif;color:#242424;transform:scaleX(0.9680);transform-origin:0 0;">Malarz formatów</div>
<div style="position:absolute;left:94.40px;top:112.84px;white-space:pre;font:normal normal 12px/1 'Liberation Sans',sans-serif;color:#242424;transform:scaleX(0.9177);transform-origin:0 0;">Schowek</div>
<div style="position:absolute;left:228.60px;top:46.92px;white-space:pre;font:normal normal 12.5px/1 'Liberation Sans',sans-serif;color:#242424;transform:scaleX(0.9440);transform-origin:0 0;">Aptos Narrow</div>
<div style="position:absolute;left:353.50px;top:46.92px;white-space:pre;font:normal normal 12.5px/1 'Liberation Sans',sans-serif;color:#242424;transform:scaleX(0.8599);transform-origin:0 0;">11</div>
<div style="position:absolute;left:234.00px;top:76.53px;white-space:pre;font:normal bold 14.5px/1 'Liberation Sans',sans-serif;color:#333;transform:scaleX(0.7100);transform-origin:0 0;">B</div>
<div style="position:absolute;left:304.50px;top:112.84px;white-space:pre;font:normal normal 12px/1 'Liberation Sans',sans-serif;color:#242424;transform:scaleX(0.9038);transform-origin:0 0;">Czcionka</div>
<div style="position:absolute;left:629.00px;top:48.02px;white-space:pre;font:normal normal 12.5px/1 'Liberation Sans',sans-serif;color:#242424;transform:scaleX(0.9366);transform-origin:0 0;">Zawijaj tekst</div>
<div style="position:absolute;left:629.20px;top:79.92px;white-space:pre;font:normal normal 12.5px/1 'Liberation Sans',sans-serif;color:#242424;transform:scaleX(0.9411);transform-origin:0 0;">Scal i wyśrodkuj</div>
<div style="position:absolute;left:562.80px;top:112.84px;white-space:pre;font:normal normal 12px/1 'Liberation Sans',sans-serif;color:#242424;transform:scaleX(0.9767);transform-origin:0 0;">Wyrównanie</div>
<div style="position:absolute;left:765.30px;top:46.92px;white-space:pre;font:normal normal 12.5px/1 'Liberation Sans',sans-serif;color:#242424;transform:scaleX(0.9590);transform-origin:0 0;">Ogólne</div>
<div style="position:absolute;left:833.00px;top:80.18px;white-space:pre;font:normal normal 9px/1 'Liberation Sans',sans-serif;color:#6a6a6a;transform:scaleX(1.0459);transform-origin:0 0;">000</div>
<div style="position:absolute;left:870.00px;top:75.96px;white-space:pre;font:normal normal 9.5px/1 'Liberation Sans',sans-serif;color:#333;transform:scaleX(0.9556);transform-origin:0 0;">,0</div>
<div style="position:absolute;left:865.40px;top:83.66px;white-space:pre;font:normal normal 9.5px/1 'Liberation Sans',sans-serif;color:#333;transform:scaleX(0.9208);transform-origin:0 0;">,00</div>
<div style="position:absolute;left:891.70px;top:75.96px;white-space:pre;font:normal normal 9.5px/1 'Liberation Sans',sans-serif;color:#333;transform:scaleX(0.8744);transform-origin:0 0;">,00</div>
<div style="position:absolute;left:896.40px;top:83.66px;white-space:pre;font:normal normal 9.5px/1 'Liberation Sans',sans-serif;color:#333;transform:scaleX(0.8639);transform-origin:0 0;">,0</div>
<div style="position:absolute;left:811.50px;top:112.84px;white-space:pre;font:normal normal 12px/1 'Liberation Sans',sans-serif;color:#242424;transform:scaleX(0.8568);transform-origin:0 0;">Liczba</div>
<div style="position:absolute;left:925.64px;top:73.32px;white-space:pre;font:normal normal 12.5px/1 'Liberation Sans',sans-serif;color:#242424;transform:scaleX(0.9649);transform-origin:0 0;">Formatowanie</div>
<div style="position:absolute;left:929.15px;top:88.72px;white-space:pre;font:normal normal 12.5px/1 'Liberation Sans',sans-serif;color:#242424;transform:scaleX(0.9475);transform-origin:0 0;">warunkowe</div>
<div style="position:absolute;left:1008.74px;top:73.32px;white-space:pre;font:normal normal 12.5px/1 'Liberation Sans',sans-serif;color:#242424;transform:scaleX(0.9616);transform-origin:0 0;">Formatuj jako</div>
<div style="position:absolute;left:1024.20px;top:88.72px;white-space:pre;font:normal normal 12.5px/1 'Liberation Sans',sans-serif;color:#242424;transform:scaleX(0.9383);transform-origin:0 0;">tabelę</div>
<div style="position:absolute;left:1096.68px;top:49.65px;white-space:pre;font:normal normal 14px/1 'Liberation Sans',sans-serif;color:#1f1f1f;transform:scaleX(1.0222);transform-origin:0 0;">Procentowy 2</div>
<div style="position:absolute;left:1203.00px;top:49.65px;white-space:pre;font:normal normal 14px/1 'Liberation Sans',sans-serif;color:#1f1f1f;transform:scaleX(0.9396);transform-origin:0 0;">Walutowy 2</div>
<div style="position:absolute;left:1096.68px;top:77.95px;white-space:pre;font:normal normal 14px/1 'Liberation Sans',sans-serif;color:#1f1f1f;transform:scaleX(1.0220);transform-origin:0 0;">Normalny</div>
<div style="position:absolute;left:1202.43px;top:77.95px;white-space:pre;font:normal normal 14px/1 'Liberation Sans',sans-serif;color:#006100;transform:scaleX(0.9740);transform-origin:0 0;">Dobry</div>
<div style="position:absolute;left:1115.50px;top:112.84px;white-space:pre;font:normal normal 12px/1 'Liberation Sans',sans-serif;color:#242424;transform:scaleX(0.8591);transform-origin:0 0;">Style</div>
</body></html>
